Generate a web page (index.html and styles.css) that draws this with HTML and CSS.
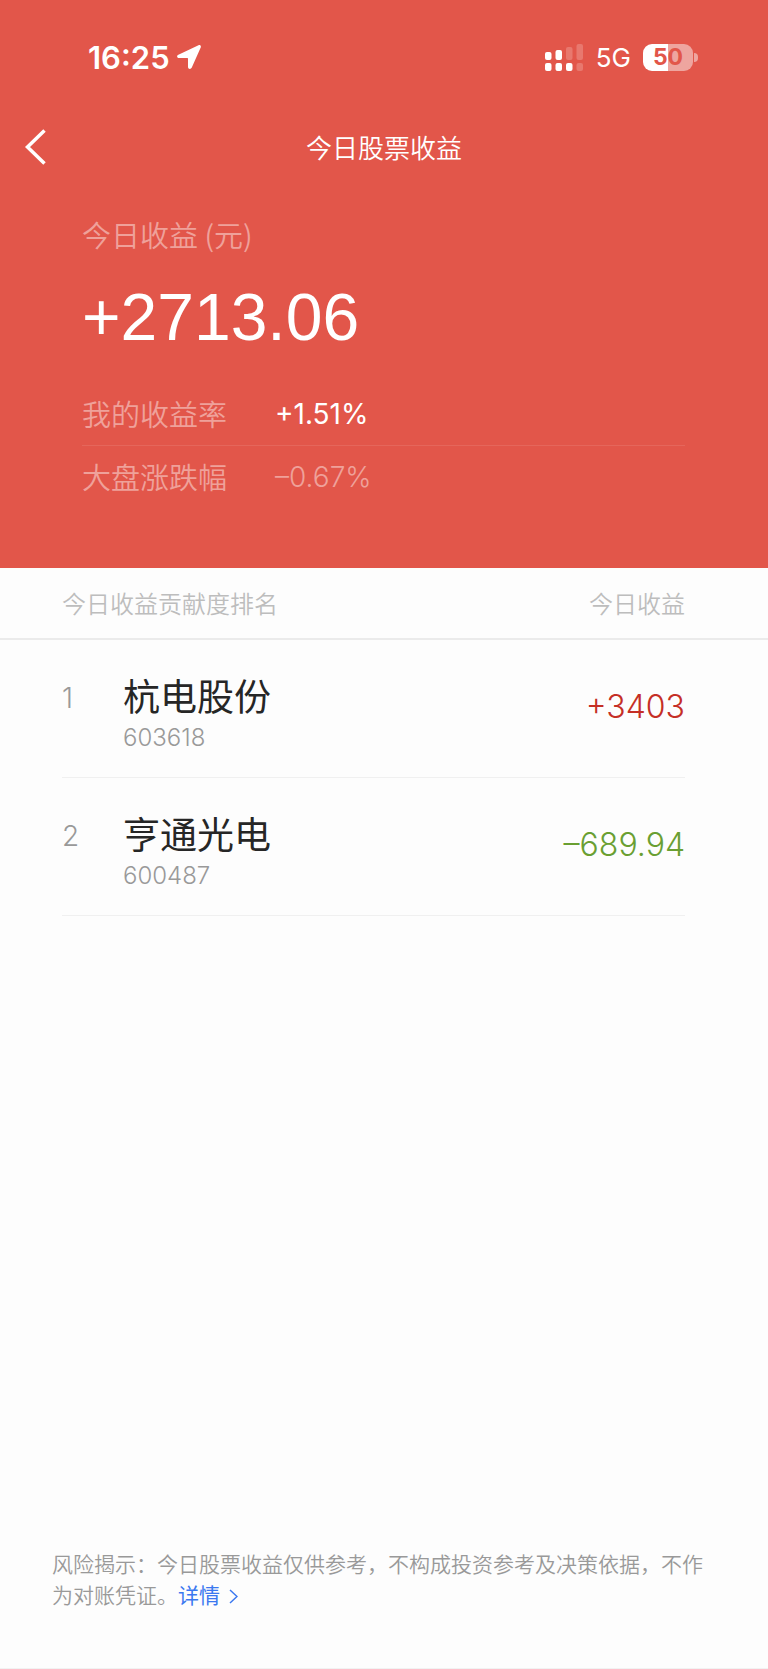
FILE: index.html
```html
<!DOCTYPE html>
<html lang="zh-CN">
<head>
  <meta charset="UTF-8">
  <meta name="viewport" content="width=device-width, initial-scale=1.0">
  <title>今日股票收益</title>
  <link rel="stylesheet" href="styles.css">
</head>
<body>
  <header class="top">
    <div class="status-bar">
      <div class="status-left">
        <span class="time">16:25</span>
        <svg class="location" viewBox="0 0 24 24" width="24" height="24" aria-hidden="true">
          <path d="M1.400 9.800 21.500.3c1.600-.7 2.900.6 2.200 2.200L14.800 22.600c-.9 2-3.800 1.600-3.800-.6V13.600c0-.4-.2-.6-.6-.6H2c-2.200 0-2.600-2.300-.6-3.200z"/>
        </svg>
      </div>
      <div class="status-right">
        <svg class="signal" viewBox="0 0 38 27" width="38" height="27" aria-hidden="true">
          <g class="signal-on">
            <rect x="0" y="8" width="6.500" height="8" rx="2"/>
            <rect x="10.500" y="6" width="6.500" height="10" rx="2"/>
            <rect x="0" y="19" width="6.500" height="8" rx="2"/>
            <rect x="10.500" y="19" width="6.500" height="8" rx="2"/>
            <rect x="21" y="19" width="6.500" height="8" rx="2"/>
          </g>
          <g class="signal-off">
            <rect x="21" y="3" width="6.500" height="13" rx="2"/>
            <rect x="31.500" y="0" width="6.500" height="16" rx="2"/>
            <rect x="31.500" y="19" width="6.500" height="8" rx="2"/>
          </g>
        </svg>
        <span class="network">5G</span>
        <div class="battery">
          <span class="battery-body">50</span>
          <span class="battery-tip"></span>
        </div>
      </div>
    </div>

    <nav class="nav-bar">
      <button type="button" class="back" aria-label="返回">
        <svg viewBox="0 0 22 36" width="22" height="36" aria-hidden="true">
          <path d="M20.500 1.500 3.500 18 20.500 34.500"/>
        </svg>
      </button>
      <h1 class="title">今日股票收益</h1>
    </nav>

    <section class="summary">
      <p class="summary-label">今日收益 (元)</p>
      <p class="summary-total">+2713.06</p>
      <dl class="rates">
        <div class="rate">
          <dt>我的收益率</dt>
          <dd>+1.51%</dd>
        </div>
        <div class="rate rate-market">
          <dt>大盘涨跌幅</dt>
          <dd>–0.67%</dd>
        </div>
      </dl>
    </section>
  </header>

  <main class="content">
    <table class="ranking">
      <thead>
        <tr>
          <th colspan="2">今日收益贡献度排名</th>
          <th>今日收益</th>
        </tr>
      </thead>
      <tbody>
        <tr>
          <td class="rank">1</td>
          <td class="stock">
            <div class="stock-name">杭电股份</div>
            <div class="stock-code">603618</div>
          </td>
          <td class="amount up">+3403</td>
        </tr>
        <tr>
          <td class="rank">2</td>
          <td class="stock">
            <div class="stock-name">亨通光电</div>
            <div class="stock-code">600487</div>
          </td>
          <td class="amount down">–689.94</td>
        </tr>
      </tbody>
    </table>
  </main>

  <footer class="notice">
    <p>风险揭示：今日股票收益仅供参考，不构成投资参考及决策依据，不作为对账凭证。<a href="#detail">详情<svg viewBox="0 0 9 15" width="9" height="15" aria-hidden="true"><path d="M1 1 8 7.500 1 14"/></svg></a></p>
  </footer>
</body>
</html>
```

FILE: styles.css
```css
* {
  box-sizing: border-box;
}

body {
  display: flex;
  flex-direction: column;
  min-height: 100vh;
  margin: 0;
  background: #fdfdfd;
  color: #262626;
  font-family: "Noto Sans CJK SC", sans-serif;
}

h1, p, dl, dd {
  margin: 0;
}

svg {
  display: block;
}

/* red header */
.top {
  padding-bottom: 60px;
  background: #e2564a;
  color: #fff;
}

.status-bar {
  display: flex;
  justify-content: space-between;
  align-items: center;
  height: 114px;
  padding: 0 70px 0 88px;
}

.status-bar, .rate dd, .ranking td {
  font-family: Inter, "Noto Sans CJK SC", sans-serif;
}

.status-left, .status-right, .battery {
  display: flex;
  align-items: center;
}

.status-left {
  gap: 7px;
}

.time {
  font-size: 31px;
  font-weight: 600;
}

.location, .signal-on {
  fill: #fff;
}

.signal-off {
  fill: #e8786e;
}

.network {
  margin: 0 12px 0 13px;
  font-size: 26px;
}

.battery {
  gap: 1px;
}

.battery-body {
  width: 50px;
  border-radius: 9px;
  background: linear-gradient(to right, #fff 50%, #eea59f 50%);
  color: #e2564a;
  font-size: 23px;
  font-weight: 700;
  line-height: 27px;
  text-align: center;
}

.battery-tip {
  width: 4px;
  height: 9px;
  border-radius: 0 4px 4px 0;
  background: #eea59f;
}

.nav-bar {
  display: grid;
  grid-template-columns: 60px 1fr 60px;
  align-items: center;
  height: 66px;
}

.back {
  padding: 0 0 0 24px;
  border: none;
  background: none;
  cursor: pointer;
}

.back path {
  fill: none;
  stroke: #fff;
  stroke-width: 3.500;
}

.title {
  font-size: 26px;
  font-weight: 350;
  line-height: 36px;
  text-align: center;
}

.summary {
  padding: 32px 83px 0 82px;
}

.summary-label, .rate {
  font-size: 29px;
  font-weight: 350;
  line-height: 44px;
}

.summary-label, .rate dt, .rate-market dd {
  color: #efa19a;
}

.summary-total {
  margin-top: 23px;
  font-family: "Liberation Sans", Arial, sans-serif;
  font-size: 66px;
  line-height: 76px;
}

.rates {
  margin-top: 28px;
}

.rate {
  display: flex;
  gap: 48px;
  padding: 8px 0;
}

.rate + .rate {
  border-top: 1px solid #e5665b;
}

.rate dd {
  font-size: 28px;
  font-weight: 400;
  line-height: 46px;
}

.rate-market dd {
  font-weight: 350;
}

/* ranking list */
.content {
  flex: 1;
}

.ranking, .ranking thead, .ranking tbody {
  display: block;
}

.ranking tr {
  display: flex;
}

.ranking thead tr {
  justify-content: space-between;
  padding: 17px 83px 17px 62px;
  border-bottom: 2px solid #ebebeb;
}

.ranking th {
  padding: 0;
  color: #bdbdbd;
  font-size: 24px;
  font-weight: 350;
  line-height: 36px;
}

.ranking tbody tr {
  margin: 0 83px 0 62px;
  padding: 33px 0 24px;
  border-bottom: 1px solid #f0f0f0;
}

.ranking td {
  padding: 0;
}

.ranking .rank {
  width: 61px;
  color: #999;
  font-size: 28px;
  font-weight: 300;
  line-height: 50px;
}

.stock {
  flex: 1;
}

.stock-name {
  font-size: 37px;
  line-height: 50px;
}

.stock-code {
  color: #999;
  font-size: 24px;
  font-weight: 350;
  line-height: 30px;
}

.amount {
  font-size: 32px;
  font-weight: 350;
  line-height: 68px;
}

.up {
  color: #c52f26;
}

.down {
  color: #6a9f32;
}

/* risk notice */
.notice {
  padding: 0 60px 58px 52px;
  border-bottom: 1px solid #f2f2f2;
  color: #999;
  font-size: 21px;
  font-weight: 350;
  line-height: 31px;
}

.notice a {
  color: #3b78f0;
  font-weight: 400;
  text-decoration: none;
}

.notice svg {
  display: inline;
  margin-left: 9px;
  vertical-align: -1px;
}

.notice path {
  fill: none;
  stroke: #3b78f0;
  stroke-width: 1.500;
}
```
